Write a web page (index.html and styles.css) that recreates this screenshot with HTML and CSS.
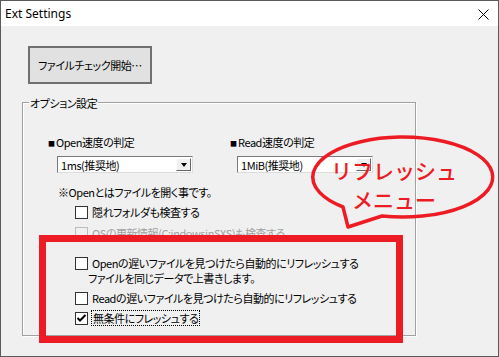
FILE: index.html
```html
<!DOCTYPE html>
<html lang="ja">
<head>
  <meta charset="UTF-8">
  <meta name="viewport" content="width=device-width, initial-scale=1.0">
  <title>Ext Settings</title>
  <link rel="stylesheet" href="styles.css">
</head>
<body>
  <div class="window">
    <div class="titlebar">
      <span class="title">Ext Settings</span>
      <svg class="close" width="11" height="11" viewBox="0 0 11 11">
        <path d="M0.5 0.5 L10.5 10.5 M10.5 0.5 L0.5 10.5" stroke="#000" stroke-width="1" fill="none"/>
      </svg>
    </div>
    <div class="client">
      <button class="btn-check">ファイルチェック開始…</button>
      <div class="group">
        <div class="group-title">オプション設定</div>
        <div class="speed-grid">
          <div class="speed">
            <div class="speed-label"><span class="square">■</span>Open速度の判定</div>
            <div class="combo combo-open">
              <span class="combo-text">1ms(推奨地)</span>
              <span class="combo-btn"><i class="arrow"></i></span>
            </div>
          </div>
          <div class="speed">
            <div class="speed-label"><span class="square">■</span>Read速度の判定</div>
            <div class="combo combo-read">
              <span class="combo-text">1MiB(推奨地)</span>
              <span class="combo-btn"><i class="arrow"></i></span>
            </div>
          </div>
        </div>
        <div class="note">※Openとはファイルを開く事です。</div>
        <div class="check check-hidden">
          <span class="box"></span>
          <span class="label">隠れフォルダも検査する</span>
        </div>
        <div class="check check-os disabled">
          <span class="box"></span>
          <span class="label">OSの更新情報(C:indowsinSXS)も検査する</span>
        </div>
        <div class="check check-open">
          <span class="box"></span>
          <span class="label">
            <span class="line">Openの遅いファイルを見つけたら自動的にリフレッシュする</span>
            <span class="line line-wrap">ファイルを同じデータで上書きします。</span>
          </span>
        </div>
        <div class="check check-read">
          <span class="box"></span>
          <span class="label">Readの遅いファイルを見つけたら自動的にリフレッシュする</span>
        </div>
        <div class="check check-always">
          <span class="box checked">
            <svg width="11" height="11" viewBox="0 0 11 11"><path d="M1.5 5 L4 7.5 L9.5 2" stroke="#000" stroke-width="2" fill="none"/></svg>
          </span>
          <span class="label focus">無条件にフレッシュする</span>
        </div>
      </div>
    </div>

    <div class="highlight"></div>
    <svg class="callout" width="499" height="357" viewBox="0 0 499 357">
      <path d="M382 216 L348 227 L343 207 A90 40 0 1 1 382 216 Z" fill="none" stroke="#ed1c24" stroke-width="3.5" stroke-linejoin="round"/>
      <text x="394" y="170" class="callout-text">リフレッシュ</text>
      <text x="394" y="199" class="callout-text">メニュー</text>
    </svg>
  </div>
</body>
</html>
```

FILE: styles.css
```css
html, body { margin: 0; padding: 0; }
body { background: #f0f0f0; font-family: "Noto Sans CJK JP", sans-serif; font-size: 11px; color: #000; }

.window { position: relative; width: 499px; height: 357px; box-sizing: border-box; border: 1px solid #5a5a5a; background: #f0f0f0; overflow: hidden; }

.titlebar { display: flex; align-items: center; justify-content: space-between; height: 25px; background: #fff; padding: 0 9px 0 4px; }
.title { font-family: "Noto Sans", sans-serif; font-size: 12px; line-height: 14px; }
.close { display: block; margin-top: 1px; }

.client { height: 330px; box-sizing: border-box; padding: 20px 0 0 21px; font-size: 11px; letter-spacing: -0.45px; font-feature-settings: "palt"; }

.btn-check { display: block; margin: 0 0 0 6px; width: 124px; height: 38px; box-sizing: border-box; border: 2px solid #707070; background: #e1e1e1; font-family: "Noto Sans CJK JP", sans-serif; font-size: 11px; letter-spacing: -0.45px; font-feature-settings: "palt"; color: #000; padding: 0; }

.group { margin-top: 18px; width: 394px; height: 234px; box-sizing: border-box; border: 1px solid #a0a0a0; box-shadow: 1px 1px 0 #fff, inset 1px 1px 0 #fff; }
.group-title { width: fit-content; margin: -7px 0 0 6px; padding: 0 1px; height: 14px; line-height: 14px; background: #f0f0f0; }

.speed-grid { display: grid; grid-template-columns: 182px 1fr; padding-left: 25px; margin-top: 24px; }
.speed-label { line-height: 16px; height: 16px; }
.square { font-size: 7px; letter-spacing: 0; margin-right: 1px; vertical-align: 1px; }

.combo { display: flex; align-items: center; justify-content: space-between; margin-top: 6px; width: 136px; height: 17px; box-sizing: border-box; background: #fff; border: 1px solid; border-color: #7a7a7a #dcdcdc #dcdcdc #7a7a7a; }
.combo-open { margin-left: 9px; }
.combo-read { margin-left: 7px; }
.combo-text { padding-left: 3px; line-height: 14px; }
.combo-btn { display: flex; align-items: center; justify-content: center; width: 15px; height: 13px; margin-right: 1px; box-sizing: border-box; background: #f0f0f0; border: 1px solid; border-color: #fff #696969 #696969 #fff; }
.arrow { width: 0; height: 0; border-left: 3.5px solid transparent; border-right: 3.5px solid transparent; border-top: 4px solid #000; }

.note { margin-top: 11px; padding-left: 35px; line-height: 16px; height: 16px; }

.check { display: flex; align-items: center; margin-left: 52px; line-height: 16px; }
.check .box { display: flex; align-items: center; justify-content: center; flex: none; width: 13px; height: 13px; box-sizing: border-box; border: 1px solid #333; background: #fff; }
.check .label { margin-left: 4px; white-space: nowrap; }

.check-hidden { margin-top: 4px; height: 16px; }
.check-os { margin-top: 5px; height: 16px; }
.disabled .box { border-color: #bcbcbc; background: #f0f0f0; }
.disabled .label { color: #a0a0a0; }

.check-open { margin-top: 15px; align-items: flex-start; line-height: 15px; }
.check-open .box { margin-top: 1px; }
.check-open .line { display: block; }
.check-open .line-wrap { margin-left: -4px; }

.check-read { margin-top: 4px; height: 16px; }
.check-always { margin-top: 4px; height: 16px; }
.check .focus { margin-left: 3px; padding: 0 1px; line-height: 14px; border: 1px dotted #000; }

.highlight { position: absolute; left: 38px; top: 234px; width: 364px; height: 108px; box-sizing: border-box; border: 7px solid #ed1c24; }
.callout { position: absolute; left: -1px; top: -1px; pointer-events: none; }
.callout-text { font-family: "Noto Sans CJK JP", sans-serif; font-size: 21px; font-weight: 500; fill: #ed1c24; text-anchor: middle; dominant-baseline: central; }
```
